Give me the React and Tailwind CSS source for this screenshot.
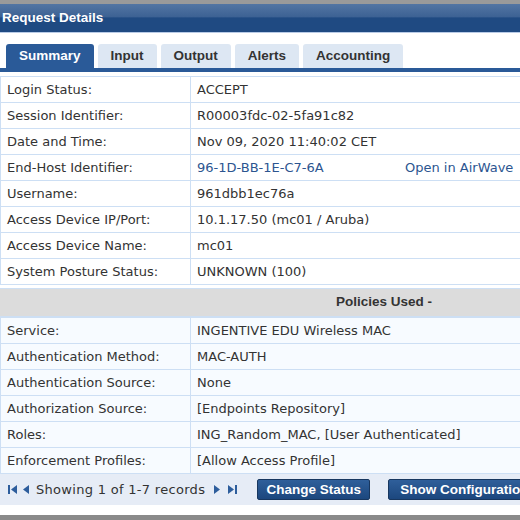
import React from "react";

const summary = [
  ["Login Status:", "ACCEPT"],
  ["Session Identifier:", "R00003fdc-02-5fa91c82"],
  ["Date and Time:", "Nov 09, 2020 11:40:02 CET"],
  ["End-Host Identifier:", "96-1D-BB-1E-C7-6A", true],
  ["Username:", "961dbb1ec76a"],
  ["Access Device IP/Port:", "10.1.17.50 (mc01 / Aruba)"],
  ["Access Device Name:", "mc01"],
  ["System Posture Status:", "UNKNOWN (100)"],
];

const policies = [
  ["Service:", "INGENTIVE EDU Wireless MAC"],
  ["Authentication Method:", "MAC-AUTH"],
  ["Authentication Source:", "None"],
  ["Authorization Source:", "[Endpoints Repository]"],
  ["Roles:", "ING_Random_MAC, [User Authenticated]"],
  ["Enforcement Profiles:", "[Allow Access Profile]"],
];

const tabs = ["Summary", "Input", "Output", "Alerts", "Accounting"];

function Row({ label, value, link, tint }) {
  return (
    <div className={`grid grid-cols-[190px_1fr] h-[26px] border-b border-[#cddff4] ${tint ? "bg-[#f7fbff]" : "bg-white"}`}>
      <div className="border-r border-[#cddff4] pl-[6px] flex items-center">{label}</div>
      <div className="pl-[6px] flex items-center">
        {link ? (
          <>
            <span className="text-[#2c5590] w-[208px]">{value}</span>
            <span className="text-[#2c5590]">Open in AirWave</span>
          </>
        ) : (
          <span>{value}</span>
        )}
      </div>
    </div>
  );
}

function Arrow({ dir, bar }) {
  return (
    <svg width="11" height="11" viewBox="0 0 11 11" className="text-[#2d5d9c]">
      {dir === "left" ? (
        <>
          {bar && <rect x="1" y="1" width="2" height="9" fill="currentColor" />}
          <path d={bar ? "M10 1 L4 5.5 L10 10 Z" : "M9 1 L3 5.5 L9 10 Z"} fill="currentColor" />
        </>
      ) : (
        <>
          <path d={bar ? "M1 1 L7 5.5 L1 10 Z" : "M2 1 L8 5.5 L2 10 Z"} fill="currentColor" />
          {bar && <rect x="8" y="1" width="2" height="9" fill="currentColor" />}
        </>
      )}
    </svg>
  );
}

export default function App() {
  return (
    <div className="w-[520px] h-[520px] overflow-hidden bg-white flex flex-col text-[13px] text-[#333] font-['DejaVu_Sans',sans-serif]">
      <div className="h-[4px] bg-[#9a9a9a]" />
      <div className="h-[28px] flex items-center pl-[2px] bg-[linear-gradient(#5375a3,#3d6294_45%,#1f4a82_50%,#1f4a82)] text-white font-bold font-['Liberation_Sans',sans-serif] text-[13.5px]">
        Request Details
      </div>
      <div className="h-px bg-[#b9cbe6]" />
      <div className="w-[768px] flex flex-col">
        <div className="h-[11px]" />
        <div className="flex gap-[4px] pl-[6px] items-end font-['Liberation_Sans',sans-serif] font-bold text-[13.5px]">
          {tabs.map((t, i) => (
            <div
              key={t}
              className={`h-[24px] rounded-t-[3px] flex items-center ${i === 0 ? "bg-[#2a5a98] text-white px-[13px]" : "bg-[#dde7f3] text-[#333] px-[13px]"}`}
            >
              {t}
            </div>
          ))}
        </div>
        <div className="h-[4px] bg-[#2a5a98]" />
        <div className="h-[4px]" />
        <div className="border-t border-l border-[#cddff4]">
          {summary.map(([l, v, link]) => (
            <Row key={l} label={l} value={v} link={link} />
          ))}
        </div>
        <div className="h-[3px]" />
        <div className="h-[28px] bg-[#dcdcdc] border-t border-[#cddff4] flex items-center justify-center font-bold font-['Liberation_Sans',sans-serif] text-[13.5px]">
          Policies Used -
        </div>
        <div className="border-t-2 border-l border-[#cddff4]">
          {policies.map(([l, v]) => (
            <Row key={l} label={l} value={v} tint />
          ))}
        </div>
        <div className="h-[31px] bg-[#e6ecf6] flex items-center pl-[7px]">
          <div className="flex items-center gap-[2px]">
            <Arrow dir="left" bar />
            <Arrow dir="left" />
          </div>
          <span className="ml-[5px] mr-[7px] tracking-[0.3px]">Showing 1 of 1-7 records</span>
          <div className="flex items-center gap-[4px]">
            <Arrow dir="right" />
            <Arrow dir="right" bar />
          </div>
          <div className="flex gap-[18px] ml-[19px] font-['Liberation_Sans',sans-serif] font-bold text-[13.5px] text-white">
            <button className="h-[21px] w-[113px] rounded-[2px] border border-[#18375f] bg-[linear-gradient(#2f5f9a,#1c477e)]">
              Change Status
            </button>
            <button className="h-[21px] px-[11px] rounded-[2px] border border-[#18375f] bg-[linear-gradient(#2f5f9a,#1c477e)]">
              Show Configuration
            </button>
          </div>
        </div>
      </div>
      <div className="h-[10px]" />
      <div className="flex-1 bg-[#8a8a8a]" />
    </div>
  );
}
